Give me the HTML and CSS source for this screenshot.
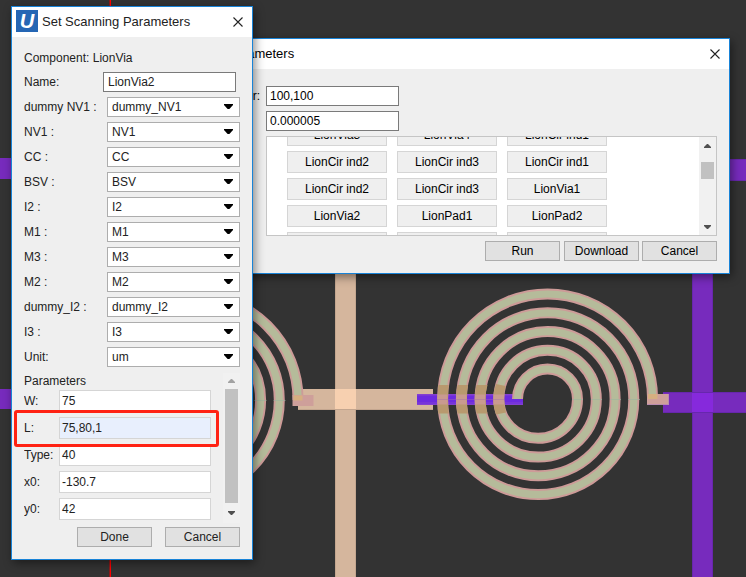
FILE: index.html
```html
<!DOCTYPE html>
<html lang="en">
<head>
<meta charset="utf-8">
<title>Set Scanning Parameters</title>
<link rel="stylesheet" href="styles.css">
</head>
<body>
<main class="desktop">
  <svg class="canvas" width="746" height="577" viewBox="0 0 746 577">
    <defs>
      <path id="coil" d="M517.5 399A30 30 0 0 1 577.5 399A39.35 39.35 0 0 1 498.8 399A48.75 48.75 0 0 1 596.3 399A58.1 58.1 0 0 1 480.1 399A67.5 67.5 0 0 1 615.1 399A76.85 76.85 0 0 1 461.4 399A86.2 86.2 0 0 1 633.8 399A95.6 95.6 0 0 1 442.6 399A105 105 0 0 1 652.6 399"/>
    </defs>
    <path class="guide-dim" d="M109 0h1v577h-1z"/>
    <path class="guide" d="M110 0h1v577h-1z"/>
    <g class="purple">
      <path d="M0 158h12v21H0zM0 389h12v20H0zM728 159h18v22h-18zM692 270h21v307h-21zM663 392h83v21h-83z"/>
      <path class="purple-edge" d="M663 392.5h83M663 412.5h83M692.5 270v307M712.5 270v307M728 159.500h18M728 180.500h18"/>
    </g>
    <path class="purple-cross" d="M692 393h21v19h-21z"/>
    <path class="tan" d="M335 270h21v307h-21zM298 389h135v21H298z"/>
    <path class="tan-edge" d="M335.500 270v307M355.500 270v307M298 409.500h135"/>
    <path class="tan-cross" d="M335 389h21v20h-21z"/>
    <g transform="translate(-354.500 1)">
      <use href="#coil" class="coil-edge"/>
      <use href="#coil" class="coil-fill"/>
      <path class="axis" d="M609 399.500h12M628 399.500h12"/>
      <path class="pad" d="M647 394h21v11h-21z"/>
      <path class="pad-mix" d="M648 394.500h9v5h-9z"/>
    </g>
    <path class="wire-edge" d="M417 394h106v11H417z"/>
    <path class="wire" d="M417 395.500h106v7H417z"/>
    <path class="wire-low" d="M417 403h106v1H417z"/>
    <use href="#coil" class="coil-edge"/>
    <use href="#coil" class="coil-fill"/>
    <g class="bridge">
      <path d="M438.300 385Q436.800 399 438.300 413.500h10.500Q446.800 399 448.800 385z"/>
      <path d="M457.500 385Q454.500 399 457.500 413.500h10.500Q465.500 399 468 385z"/>
      <path d="M476.500 385Q472.800 399 476.500 413.500h11Q483.500 399 487.500 385z"/>
      <path d="M496 384Q490.500 399 496 414.500l10-2Q502.500 399 505.500 386z"/>
    </g>
    <path class="bridge-mid" d="M437.500 394.500h10v10h-10zM456 394.500h10.500v10H456zM475 394.500h10v10h-10zM493.500 394.500h10.500v10h-10.500z"/>
    <path class="axis" d="M572 399.500h11M591 399.500h11M610 399.500h11M628 399.500h12"/>
    <path class="axis-wire" d="M437 399.500h67"/>
    <path class="pad" d="M647 394h21v11h-21z"/>
    <path class="pad-side" d="M647 404h22v1h-22zM668 394h1v11h-1z"/>
    <path class="pad-mix" d="M648 394h9.500v5h-9.500z"/>
  </svg>

  <section class="window window-run">
    <header class="titlebar titlebar-run">
      <h1 class="title">Set Scanning Parameters</h1>
      <svg class="close" width="10" height="10" viewBox="0 0 10 10"><path d="M.5.5l9 9M9.500.5l-9 9"/></svg>
    </header>
    <div class="run-body">
      <div class="run-row"><span class="run-label">r:</span><div class="field">100,100</div></div>
      <div class="run-row"><span class="run-label"></span><div class="field">0.000005</div></div>
      <div class="list">
        <div class="list-grid">
          <span class="chip">LionVia3</span><span class="chip">LionVia4</span><span class="chip">LionCir ind1</span>
          <span class="chip">LionCir ind2</span><span class="chip">LionCir ind3</span><span class="chip">LionCir ind1</span>
          <span class="chip">LionCir ind2</span><span class="chip">LionCir ind3</span><span class="chip">LionVia1</span>
          <span class="chip">LionVia2</span><span class="chip">LionPad1</span><span class="chip">LionPad2</span>
          <span class="chip"></span><span class="chip"></span><span class="chip"></span>
        </div>
        <div class="scroll scroll-list">
          <svg width="7" height="4" viewBox="0 0 7 4"><path d="M3 0h1l3 3v1H0V3z"/></svg>
          <i class="thumb thumb-list"></i>
          <svg width="7" height="4" viewBox="0 0 7 4"><path d="M0 0h7v1L4 4H3L0 1z"/></svg>
        </div>
      </div>
      <div class="run-actions"><div class="button button-run">Run</div><div class="button">Download</div><div class="button">Cancel</div></div>
    </div>
  </section>

  <section class="window window-params">
    <header class="titlebar">
      <span class="logo">U</span>
      <h1 class="title">Set Scanning Parameters</h1>
      <svg class="close" width="10" height="10" viewBox="0 0 10 10"><path d="M.5.5l9 9M9.500.5l-9 9"/></svg>
    </header>
    <div class="form">
      <div class="row component">Component: LionVia</div>
      <div class="row row-name"><span>Name:</span><div class="field">LionVia2</div></div>
      <div class="row"><span>dummy NV1 :</span><div class="select">dummy_NV1</div></div>
      <div class="row"><span>NV1 :</span><div class="select">NV1</div></div>
      <div class="row"><span>CC :</span><div class="select">CC</div></div>
      <div class="row"><span>BSV :</span><div class="select">BSV</div></div>
      <div class="row"><span>I2 :</span><div class="select">I2</div></div>
      <div class="row"><span>M1 :</span><div class="select">M1</div></div>
      <div class="row"><span>M3 :</span><div class="select">M3</div></div>
      <div class="row"><span>M2 :</span><div class="select">M2</div></div>
      <div class="row"><span>dummy_I2 :</span><div class="select">dummy_I2</div></div>
      <div class="row"><span>I3 :</span><div class="select">I3</div></div>
      <div class="row"><span>Unit:</span><div class="select">um</div></div>
      <div class="params">
        <div class="param-list">
          <div class="param-title">Parameters</div>
          <div class="param"><span>W:</span><div class="value">75</div></div>
          <div class="param"><span>L:</span><div class="value value-active">75,80,1</div></div>
          <div class="param"><span>Type:</span><div class="value">40</div></div>
          <div class="param"><span>x0:</span><div class="value">-130.7</div></div>
          <div class="param"><span>y0:</span><div class="value">42</div></div>
        </div>
        <div class="scroll scroll-params">
          <svg class="arrow-off" width="7" height="4" viewBox="0 0 7 4"><path d="M3 0h1l3 3v1H0V3z"/></svg>
          <i class="thumb thumb-params"></i>
          <svg width="7" height="4" viewBox="0 0 7 4"><path d="M0 0h7v1L4 4H3L0 1z"/></svg>
        </div>
      </div>
      <div class="actions"><div class="button">Done</div><div class="button">Cancel</div></div>
    </div>
    <div class="highlight"></div>
  </section>
</main>
</body>
</html>
```
FILE: styles.css
```css
* { box-sizing: border-box; }
body {
  margin: 0;
  background: #333;
  color: #222;
  font: 12px/20px "Liberation Sans", Arial, sans-serif;
}
.desktop { position: relative; width: 746px; height: 577px; overflow: hidden; }
.canvas { display: block; }

.guide { fill: #f00; }
.guide-dim { fill: #8a1a1a; }
.purple { fill: #772bbd; }
.purple-edge { fill: none; stroke: #6727ad; }
.purple-cross { fill: #8629dc; }
.tan { fill: #d5b69d; }
.tan-edge { fill: none; stroke: #c4a68f; }
.tan-cross { fill: #f7d0b0; }
.coil-edge { fill: none; stroke: #cd9b98; stroke-width: 11; }
.coil-fill { fill: none; stroke: #b5bb9a; stroke-width: 7.200; }
.axis { stroke: #9fb5a0; stroke-width: 1; opacity: .6; }
.axis-wire { stroke: #a26bb0; stroke-width: 1; opacity: .4; }
.pad { fill: #ce9f9a; }
.pad-side { fill: #b98caf; }
.pad-mix { fill: #d6af80; }
.wire { fill: #6d2ae0; }
.wire-edge { fill: #8440cf; }
.wire-low { fill: #7535dc; }
.bridge { fill: #b8996e; }
.bridge-mid { fill: #c99a90; }

.window {
  position: absolute;
  background: #efefef;
  border: 1px solid #1883d7;
  box-shadow: 2px 3px 9px rgba(0, 0, 0, .45);
}
.window-run { left: 102px; top: 38px; width: 628px; height: 236px; color: #000; }
.window-params { left: 11px; top: 6px; width: 242px; height: 554px; }
.titlebar {
  display: flex;
  align-items: center;
  height: 30px;
  padding: 0 9px 0 4px;
  background: #fff;
}
.titlebar-run { padding-left: 43px; color: #000; }
.title { flex: 1; margin: 0; font-size: 13px; font-weight: 400; white-space: nowrap; }
.logo {
  width: 22px;
  height: 22px;
  margin: -3px 4px 0 0;
  background: #2566b4;
  color: #fff;
  font: italic bold 20px/22px "Liberation Sans", Arial, sans-serif;
  text-align: center;
}
.close { fill: none; stroke: #222; stroke-width: 1.100; }

.field {
  width: 133px;
  height: 20px;
  padding-left: 4px;
  border: 1px solid #7a7a7a;
  background: #fff;
  line-height: 18px;
}
.button {
  width: 75px;
  height: 20px;
  border: 1px solid #adadad;
  background: #e1e1e1;
  line-height: 19px;
  text-align: center;
}

.run-body { padding: 17px 12px 0; }
.run-row { display: flex; height: 25px; }
.run-label { width: 151px; padding-right: 6px; text-align: right; }
.run-row .field { padding-left: 3px; }
.list {
  display: flex;
  justify-content: space-between;
  width: 451px;
  height: 100px;
  margin-left: 151px;
  overflow: hidden;
  border: 1px solid #c5c5c5;
  background: #fff;
}
.list-grid {
  display: grid;
  grid-template-columns: repeat(3, 100px);
  grid-auto-rows: 22px;
  gap: 5px 10px;
  margin: -13px 0 0 20px;
}
.chip { height: 22px; border: 1px solid #d5d5d5; background: #efefef; line-height: 20px; text-align: center; }
.run-actions { display: flex; justify-content: flex-end; gap: 3px; padding-top: 5px; }
.button-run { margin-right: 1px; }

.scroll {
  display: flex;
  flex-direction: column;
  align-items: center;
  background: #f1f1f1;
  fill: #505050;
}
.scroll-list { width: 17px; padding: 7px 0 6px; justify-content: space-between; }
.thumb { display: block; width: 13px; background: #c1c1c1; }
.thumb-list { height: 17px; margin-top: -33px; }

.form { padding: 10px 12px 0; }
.row { display: flex; justify-content: space-between; height: 25px; white-space: nowrap; }
.row span { line-height: 20px; }
.component { line-height: 22px; }
.row-name { padding-right: 4px; }
.select {
  display: flex;
  align-items: center;
  justify-content: space-between;
  width: 133px;
  height: 20px;
  padding: 0 6px 0 4px;
  border: 1px solid #adadad;
  background: #fff;
}
.select::after { content: ""; width: 9px; height: 5px; margin-top: -1px; background: #000; clip-path: polygon(0 0, 100% 0, 100% 20%, 60% 100%, 40% 100%, 0 20%); }
.params { display: flex; justify-content: space-between; height: 150px; margin-top: 1px; }
.param-list { width: 187px; overflow: hidden; }
.param-title { height: 17px; line-height: 16px; }
.param { display: flex; height: 27px; }
.param span { width: 35px; line-height: 22px; }
.value { width: 152px; height: 22px; padding-left: 2px; border: 1px solid #d5d5d5; background: #fff; line-height: 20px; }
.value-active { background: #e8effd; }
.scroll-params { width: 17px; padding: 6px 0; }
.thumb-params { height: 114px; margin: 6px 0 8px; }
.arrow-off { fill: #a3a3a3; }
.actions { display: flex; justify-content: flex-end; gap: 13px; padding-top: 4px; }
.highlight {
  position: absolute;
  left: 2px;
  top: 403px;
  width: 205px;
  height: 37px;
  border: 3px solid #ff2213;
  border-radius: 3px;
}
```
